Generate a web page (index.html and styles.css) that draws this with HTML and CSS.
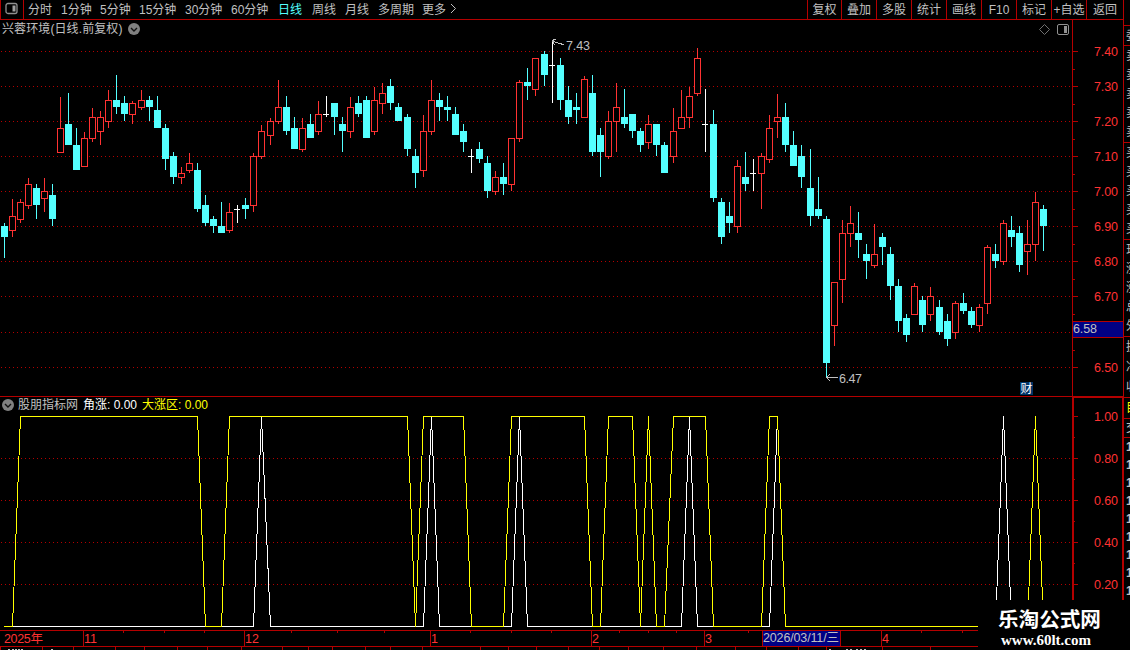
FILE: index.html
```html
<!DOCTYPE html>
<html lang="zh-CN">
  <head>
    <meta charset="UTF-8" />
    <meta name="viewport" content="width=device-width, initial-scale=1.0" />
    <title>兴蓉环境 日线</title>
    <link rel="stylesheet" href="styles.css">
  </head>
  <body>
    <div class="app">
      <div class="terminal">
        <header class="toolbar">
          <div class="layout-toggle">
            <svg width="14" height="14" viewBox="0 0 14 14">
              <rect x="1" y="1.5" width="11" height="10" rx="2" fill="none" stroke="#909090" stroke-width="1.3" />
              <rect x="7.5" y="3.5" width="3" height="6" fill="#a0a0a0" />
            </svg>
          </div>
          <nav class="periods">
            <span>分时</span>
            <span>1分钟</span>
            <span>5分钟</span>
            <span>15分钟</span>
            <span>30分钟</span>
            <span>60分钟</span>
            <span class="active">日线</span>
            <span>周线</span>
            <span>月线</span>
            <span>多周期</span>
            <span>更多</span>
            <svg width="8" height="12" viewBox="0 0 8 12">
              <path d="M1 1L5.5 5.5L1 10" fill="none" stroke="#c0c0c0" />
            </svg>
          </nav>
          <nav class="tools">
            <span>复权</span>
            <span>叠加</span>
            <span>多股</span>
            <span>统计</span>
            <span>画线</span>
            <span>F10</span>
            <span>标记</span>
            <span>+自选</span>
            <span class="last">返回</span>
          </nav>
        </header>

        <section class="panel price">
          <svg id="priceChart" width="1124" height="376" viewBox="0 20 1124 376"></svg>
          <div class="panel-title">
            <span class="stock">兴蓉环境(日线.前复权)</span>
            <svg width="12" height="12" viewBox="0 0 12 12">
              <circle cx="6" cy="6" r="6" fill="#808080" />
              <path d="M3 5L6 8L9 5" fill="none" stroke="#101010" stroke-width="1.4" />
            </svg>
          </div>
        </section>

        <section class="panel indicator">
          <svg id="signalChart" width="1124" height="234" viewBox="0 396 1124 234"></svg>
          <div class="panel-title">
            <svg width="12" height="12" viewBox="0 0 12 12">
              <circle cx="6" cy="6" r="6" fill="#808080" />
              <path d="M3 5L6 8L9 5" fill="none" stroke="#101010" stroke-width="1.4" />
            </svg>
            <span class="source">股朋指标网</span>
            <span class="rise">角涨: 0.00</span>
            <span class="zone">大涨区: 0.00</span>
          </div>
        </section>

        <svg id="timeline" class="timeline" width="1124" height="20" viewBox="0 630 1124 20"></svg>
      </div>

      <aside class="quote">
        <div class="box ratio"><span>委</span></div>
        <div class="box depth"><span>卖</span><span>卖</span><span>卖</span><span>卖</span><span>卖</span></div>
        <div class="box depth"><span>买</span><span>买</span><span>买</span><span>买</span><span>买</span></div>
        <div class="box depth"><span>现</span><span>涨</span><span>涨</span><span>总</span><span>外</span></div>
        <div class="box stats"><span>换</span><span>净</span><span>收</span></div>
        <div class="box tab"><span>目</span></div>
        <div class="box deal"><span>交</span></div>
        <div class="ticks"><span>1</span><span>1</span><span>1</span><span>1</span><span>1</span><span>1</span><span>1</span><span>1</span><span>1</span></div>
      </aside>

      <div class="brand">
        <div class="brand-name">乐淘公式网</div>
        <div class="brand-url">www.60lt.com</div>
      </div>
    </div>

    <script src="chart.js"></script>
  </body>
</html>
```
FILE: styles.css
```css
body {
  margin: 0;
  background: #000;
  color: #c0c0c0;
  font-family: "Liberation Sans", "Noto Sans CJK SC", sans-serif;
  font-size: 12px;
  overflow: hidden;
}

.app {
  position: relative;
  display: flex;
  width: 1130px;
  height: 650px;
  overflow: hidden;
}

.terminal {
  display: flex;
  flex-direction: column;
  width: 1124px;
  flex: none;
}

svg {
  display: block;
  flex: none;
}

/* top bar */
.toolbar {
  display: flex;
  height: 20px;
  box-sizing: border-box;
  border-bottom: 1px solid #b40000;
  border-left: 1px solid #b40000;
  border-right: 1px solid #b40000;
  line-height: 20px;
  white-space: nowrap;
}

.layout-toggle {
  width: 23px;
  padding: 2px 0 0 4px;
  box-sizing: border-box;
  border-right: 1px solid #b40000;
}

.periods {
  display: grid;
  grid-template-columns: 33px 39px 39px 46px 46px 47px 34px 33px 33px 44px 28px 10px;
  grid-template-rows: 20px;
  align-items: center;
  padding-left: 4px;
}

.periods svg {
  margin-bottom: 2px;
}

.periods .active {
  color: #54ffff;
}

.tools {
  display: flex;
  margin-left: auto;
}

.tools span {
  width: 35px;
  height: 19px;
  box-sizing: border-box;
  border-left: 1px solid #b40000;
  text-align: center;
}

.tools span:first-child {
  width: 34px;
}

.tools .last {
  width: 37px;
}

/* charts */
.panel {
  position: relative;
}

.panel-title {
  position: absolute;
  left: 2px;
  top: 0;
  display: flex;
  align-items: center;
  height: 18px;
  line-height: 16px;
  white-space: nowrap;
}

.stock {
  width: 126px;
  letter-spacing: 0.1px;
}

.source {
  width: 65px;
  margin-left: 4px;
}

.rise {
  width: 59px;
  color: #fff;
}

.zone {
  color: #ff0;
}

.axis {
  font-size: 12.5px;
  fill: #ff3232;
}

.note {
  font-size: 12.5px;
  fill: #c0c0c0;
}

.badge {
  font-size: 12px;
  fill: #fff;
}

/* right quote strip, only its left edge is on screen */
.quote {
  width: 6px;
  flex: none;
  overflow: hidden;
  padding-top: 25px;
}

.box {
  display: flex;
  flex-direction: column;
  justify-content: space-around;
  box-sizing: border-box;
  border-top: 1px solid #b40000;
  padding-left: 2px;
  line-height: 18px;
  overflow: hidden;
}

.box span,
.ticks span {
  width: 14px;
}

.ratio {
  height: 20px;
}

.depth {
  height: 97px;
}

.stats {
  height: 61px;
}

.tab {
  height: 21px;
  color: #ff0;
}

.deal {
  height: 20px;
  border-bottom: 1px solid #b40000;
}

.ticks {
  display: flex;
  flex-direction: column;
  padding-left: 2px;
  line-height: 18px;
  font-weight: bold;
}

/* site mark over the bottom right corner */
.brand {
  position: absolute;
  right: 0;
  bottom: 0;
  width: 152px;
  height: 50px;
  box-sizing: border-box;
  padding: 4px 0 0 20px;
  background: #000;
  color: #fff;
  white-space: nowrap;
}

.brand-name {
  font-family: "Noto Sans CJK SC", sans-serif;
  font-weight: bold;
  font-size: 20.6px;
  line-height: 28px;
}

.brand-url {
  padding-left: 3px;
  font-family: "Liberation Serif", serif;
  font-weight: bold;
  font-size: 15px;
  line-height: 16px;
}
```
FILE: chart.js
```js
const RED = "#ff3232";
const CYAN = "#54ffff";
const WHITE = "#ffffff";
const FRAME = "#b40000";
const NS = "http://www.w3.org/2000/svg";

// type, x, high, body top, body bottom, low
// r = up, c = down, w = open equals close
const candles = [
  ["c", 4, 223, 226, 237, 258], ["r", 12, 199, 216, 231, 237], ["r", 20, 199, 202, 220, 223],
  ["r", 28, 178, 184, 206, 209], ["c", 36, 184, 188, 205, 219], ["r", 44, 178, 191, 199, 212],
  ["c", 52, 184, 195, 219, 226], ["r", 60, 97, 128, 153, 153], ["c", 68, 93, 124, 145, 145],
  ["c", 76, 128, 145, 170, 170], ["r", 84, 132, 138, 167, 167], ["r", 92, 108, 117, 139, 142],
  ["r", 100, 111, 117, 132, 145], ["r", 108, 90, 100, 122, 128], ["c", 116, 75, 100, 107, 114],
  ["c", 124, 96, 103, 114, 121], ["r", 132, 101, 103, 115, 124], ["r", 141, 90, 100, 108, 110],
  ["c", 149, 96, 100, 107, 121], ["c", 157, 96, 110, 128, 128], ["c", 165, 124, 128, 159, 170],
  ["c", 173, 152, 156, 177, 184], ["r", 181, 167, 173, 178, 184], ["r", 189, 153, 163, 171, 173],
  ["c", 197, 163, 170, 209, 212], ["c", 205, 195, 205, 223, 226], ["c", 213, 216, 219, 226, 233],
  ["c", 221, 202, 226, 233, 233], ["r", 229, 203, 212, 231, 233], ["w", 237, 205, 209, 210, 223],
  ["c", 245, 198, 205, 209, 219], ["r", 253, 153, 156, 206, 212], ["r", 261, 125, 131, 157, 159],
  ["r", 270, 118, 121, 136, 145], ["r", 278, 80, 107, 122, 124], ["c", 286, 96, 107, 131, 135],
  ["c", 294, 117, 128, 149, 149], ["r", 302, 118, 128, 150, 152], ["c", 310, 114, 124, 138, 138],
  ["r", 318, 101, 114, 132, 135], ["w", 326, 96, 114, 115, 117], ["c", 334, 103, 103, 117, 135],
  ["c", 342, 117, 124, 131, 152], ["r", 350, 97, 107, 132, 138], ["c", 358, 96, 103, 114, 117],
  ["c", 366, 96, 100, 138, 138], ["r", 374, 87, 100, 132, 135], ["r", 382, 83, 93, 104, 114],
  ["c", 390, 79, 86, 103, 110], ["c", 398, 103, 107, 121, 121], ["c", 407, 114, 117, 149, 156],
  ["c", 415, 149, 156, 173, 188], ["r", 423, 115, 131, 171, 177], ["r", 431, 80, 100, 132, 135],
  ["c", 439, 93, 100, 107, 121], ["c", 447, 96, 107, 110, 121], ["c", 455, 107, 114, 135, 135],
  ["c", 463, 124, 131, 142, 152], ["w", 471, 149, 156, 157, 173], ["c", 479, 142, 149, 159, 163],
  ["c", 487, 156, 163, 191, 198], ["r", 495, 171, 177, 192, 195], ["c", 503, 163, 177, 184, 195],
  ["r", 511, 138, 138, 185, 191], ["r", 519, 80, 82, 139, 142], ["c", 527, 68, 82, 86, 100],
  ["r", 535, 58, 58, 90, 96], ["c", 544, 51, 54, 75, 86], ["w", 552, 40, 65, 66, 103],
  ["c", 560, 58, 65, 100, 110], ["c", 568, 86, 100, 117, 124], ["c", 576, 93, 107, 110, 124],
  ["r", 584, 76, 79, 118, 118], ["c", 592, 75, 93, 152, 156], ["c", 600, 128, 135, 152, 177],
  ["r", 608, 111, 121, 157, 159], ["r", 616, 83, 107, 122, 152], ["c", 624, 89, 117, 124, 128],
  ["c", 632, 114, 114, 131, 138], ["c", 640, 128, 131, 145, 152], ["r", 648, 115, 124, 143, 149],
  ["c", 656, 124, 124, 145, 156], ["c", 664, 142, 145, 173, 173], ["r", 673, 108, 131, 157, 163],
  ["r", 681, 90, 117, 129, 129], ["r", 689, 87, 96, 118, 128], ["r", 697, 48, 58, 94, 96],
  ["w", 705, 89, 124, 125, 152], ["c", 713, 110, 124, 198, 202], ["c", 721, 198, 202, 237, 244],
  ["c", 729, 202, 216, 223, 233], ["r", 737, 160, 166, 227, 233], ["c", 745, 152, 177, 184, 191],
  ["w", 753, 159, 173, 174, 191], ["r", 761, 153, 156, 174, 209], ["r", 769, 115, 128, 160, 163],
  ["r", 777, 94, 117, 122, 138], ["c", 785, 103, 117, 145, 152], ["c", 793, 131, 145, 166, 166],
  ["c", 801, 145, 156, 177, 188], ["c", 810, 149, 188, 216, 226], ["c", 818, 177, 209, 216, 219],
  ["c", 826, 216, 219, 363, 377], ["r", 834, 282, 282, 326, 346], ["r", 842, 220, 233, 280, 303],
  ["r", 850, 206, 223, 234, 247], ["c", 858, 212, 233, 240, 258], ["c", 866, 244, 254, 261, 279],
  ["r", 874, 224, 254, 266, 268], ["c", 882, 233, 237, 247, 265], ["c", 890, 247, 254, 286, 300],
  ["c", 898, 279, 286, 321, 332], ["c", 906, 314, 318, 335, 342], ["r", 914, 283, 286, 315, 315],
  ["c", 922, 296, 300, 325, 332], ["r", 930, 287, 296, 315, 321], ["c", 939, 300, 307, 332, 335],
  ["c", 947, 314, 321, 339, 346], ["r", 955, 301, 303, 333, 339], ["c", 963, 293, 303, 311, 314],
  ["c", 971, 307, 311, 325, 328], ["r", 979, 304, 307, 326, 332], ["r", 987, 245, 247, 304, 314],
  ["c", 995, 244, 254, 261, 268], ["r", 1003, 220, 223, 262, 265], ["c", 1011, 216, 230, 237, 247],
  ["c", 1019, 226, 233, 265, 272], ["r", 1027, 220, 244, 252, 275], ["r", 1035, 192, 202, 245, 261],
  ["c", 1043, 205, 209, 226, 251],
];

function add(parent, name, attrs, text) {
  const el = document.createElementNS(NS, name);
  for (const key in attrs) {
    el.setAttribute(key, attrs[key]);
  }
  if (text !== undefined) {
    el.textContent = text;
  }
  parent.appendChild(el);
  return el;
}

function rect(parent, x, y, width, height, fill) {
  add(parent, "rect", { x, y, width, height, fill, "shape-rendering": "crispEdges" });
}

function line(parent, points, stroke) {
  add(parent, "polyline", {
    points,
    stroke,
    fill: "none",
    transform: "translate(0.5 0.5)",
    "stroke-linecap": "square",
    "shape-rendering": "crispEdges",
  });
}

function label(parent, x, y, width, text, cls) {
  add(parent, "text", { x, y, textLength: width, class: cls }, text);
}

function dots(parent, y) {
  for (let x = 1; x < 1072; x += 4) {
    rect(parent, x, y, 1, 1, FRAME);
  }
}

function drawPrice() {
  const svg = document.getElementById("priceChart");
  const rows = [51, 86, 121, 156, 191, 226, 261, 296, 332, 367];
  const prices = ["7.40", "7.30", "7.20", "7.10", "7.00", "6.90", "6.80", "6.70", "", "6.50"];

  rows.forEach((y, i) => {
    dots(svg, y);
    rect(svg, 1073, y, 5, 1, FRAME);
    if (i < rows.length - 1) {
      rect(svg, 1073, y + 18, 2, 1, FRAME);
    }
    if (prices[i]) {
      label(svg, 1094, y + 5, 24, prices[i], "axis");
    }
  });

  for (const [type, x, high, top, bottom, low] of candles) {
    const color = type === "r" ? RED : type === "c" ? CYAN : WHITE;
    if (type === "r") {
      rect(svg, x, high, 1, top - high, color);
      rect(svg, x, bottom, 1, low - bottom, color);
      rect(svg, x - 3, top, 7, bottom - top, color);
      rect(svg, x - 2, top + 1, 5, bottom - top - 2, "#000");
    } else {
      rect(svg, x, high, 1, low - high, color);
      rect(svg, x - 3, top, type === "w" ? 6 : 7, bottom - top, color);
    }
  }

  // highest and lowest price
  line(svg, "553,41 556,42 559,43 563,44", "#c0c0c0");
  line(svg, "555,39 553,39 552,41 554,44", "#c0c0c0");
  label(svg, 566, 50, 24, "7.43", "note");
  line(svg, "826,377 837,377", "#c0c0c0");
  line(svg, "829,374 826,377 829,380", "#c0c0c0");
  label(svg, 839, 383, 23, "6.47", "note");

  rect(svg, 1020, 382, 13, 13, "#003468");
  label(svg, 1020.5, 393, 12, "财", "badge");

  add(svg, "path", { d: "M1044.5 24.5L1049.5 29.5L1044.5 34.5L1039.5 29.5Z", fill: "none", stroke: "#707070" });
  add(svg, "rect", { x: 1057.5, y: 24.5, width: 11, height: 10, rx: 1.5, fill: "none", stroke: "#909090" });
  rect(svg, 1064, 26, 3, 7, "#909090");

  rect(svg, 1072, 20, 1, 376, FRAME);
  rect(svg, 1123, 20, 1, 376, FRAME);

  // cursor price
  rect(svg, 1072, 321, 52, 17, FRAME);
  rect(svg, 1073, 322, 50, 15, "#000084");
  label(svg, 1073, 333, 24, "6.58", "note");
}

function drawSignals() {
  const svg = document.getElementById("signalChart");
  const scale = ["1.00", "0.80", "0.60", "0.40", "0.20"];

  scale.forEach((value, i) => {
    const y = 416 + i * 42;
    if (i > 0) {
      dots(svg, y);
    }
    rect(svg, 1074, y, 4, 1, FRAME);
    rect(svg, 1074, y + 21, 1, 1, FRAME);
    label(svg, 1094, y + 5, 24, value, "axis");
  });

  line(svg,
    "4,626 253,626 261,416 270,626 423,626 431,416 439,626 511,626 519,416 527,626 681,626 " +
    "689,416 697,626 769,626 777,416 785,626 995,626 1003,416 1011,626 1043,626", WHITE);
  line(svg,
    "4,626 12,626 20,416 197,416 205,626 221,626 229,416 407,416 415,626 423,416 463,416 471,626 " +
    "503,626 511,416 584,416 592,626 600,626 608,416 632,416 640,626 648,416 656,626 664,626 " +
    "673,416 705,416 713,626 761,626 769,416 777,416 785,626 1027,626 1035,416 1043,626", "#ffff00");

  rect(svg, 0, 396, 1124, 1, FRAME);
  rect(svg, 1072, 396, 52, 2, FRAME);
  rect(svg, 1072, 396, 2, 234, FRAME);
  rect(svg, 1122, 396, 2, 234, FRAME);
}

function drawTimeline() {
  const svg = document.getElementById("timeline");
  rect(svg, 0, 630, 1124, 1, FRAME);
  rect(svg, 0, 646, 1124, 1, FRAME);

  for (const x of [83, 244, 430, 591, 704, 881]) {
    rect(svg, x, 630, 1, 16, FRAME);
  }
  for (const x of [123, 164, 204, 291, 337, 384, 470, 511, 551, 619, 648, 676, 748, 921, 962]) {
    rect(svg, x, 631, 1, 2, FRAME);
  }
  for (const x of [0, 42, 73, 115, 144, 177, 207, 241, 282, 308, 332, 365, 390, 422, 480, 508, 536, 568, 599, 628, 663, 696, 735, 766, 798, 826, 882, 930]) {
    rect(svg, x, 646, 1, 4, FRAME);
  }

  label(svg, 4, 643, 39, "2025年", "axis");
  label(svg, 84, 643, 13, "11", "axis");
  label(svg, 245, 643, 14, "12", "axis");
  label(svg, 431, 643, 7, "1", "axis");
  label(svg, 592, 643, 7, "2", "axis");
  label(svg, 705, 643, 7, "3", "axis");
  label(svg, 882, 643, 7, "4", "axis");

  rect(svg, 762, 631, 79, 15, "#000084");
  rect(svg, 762, 630, 1, 16, FRAME);
  rect(svg, 840, 630, 1, 16, FRAME);
  label(svg, 763, 642, 76, "2026/03/11/三", "note");

  // tops of the tab captions below the edge
  for (const x of [8, 12, 15, 18, 21, 51, 829, 846, 850, 856, 860, 864]) {
    rect(svg, x, 649, 2, 1, "#c0c0c0");
  }
}

drawPrice();
drawSignals();
drawTimeline();
```
